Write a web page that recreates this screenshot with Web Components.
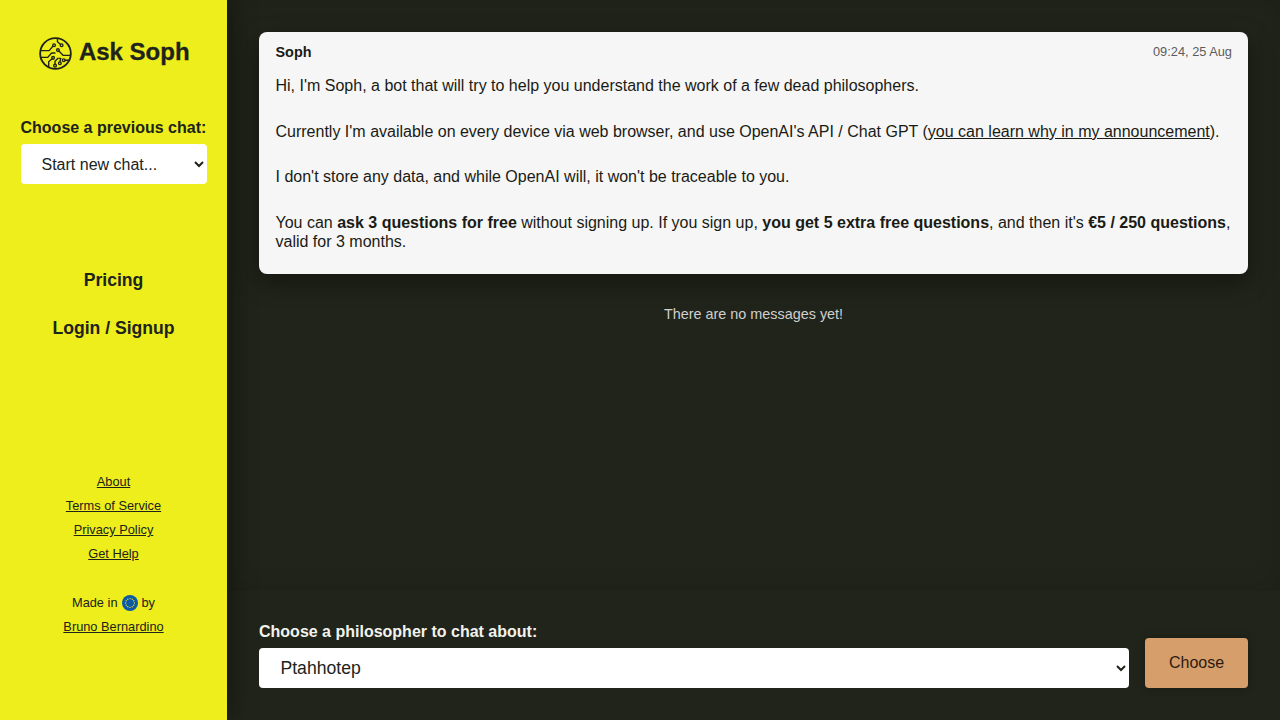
<!DOCTYPE html>
<html lang="en">
<head>
<meta charset="utf-8">
<title>Ask Soph</title>
<style>
  html, body { margin: 0; height: 100%; }
  body {
    font-family: "Liberation Sans", Arial, sans-serif;
    font-size: 16px;
    color: #20231b;
    background: #21241a;
  }
  ask-app { height: 720px; }
  ask-message a { color: inherit; }
</style>
</head>
<body>
<ask-app>
  <ask-sidebar slot="sidebar">
    <ask-logo></ask-logo>
    <ask-select-field label="Choose a previous chat:" value="Start new chat..."></ask-select-field>
  </ask-sidebar>
  <ask-chat slot="main">
    <ask-message name="Soph" time="09:24, 25 Aug">
      <p>Hi, I'm Soph, a bot that will try to help you understand the work of a few dead philosophers.</p>
      <p>Currently I'm available on every device via web browser, and use OpenAI's API / Chat GPT (<a href="#">you can learn why in my announcement</a>).</p>
      <p>I don't store any data, and while OpenAI will, it won't be traceable to you.</p>
      <p>You can <b>ask 3 questions for free</b> without signing up. If you sign up, <b>you get 5 extra free questions</b>, and then it's <b>€5 / 250 questions</b>, valid for 3 months.</p>
    </ask-message>
  </ask-chat>
</ask-app>

<script>
class AskApp extends HTMLElement {
  constructor() {
    super();
    this.attachShadow({ mode: "open" });
    this.shadowRoot.innerHTML = `
      <style>
        :host { display: flex; width: 100%; }
        .side { flex: 0 0 227px; display: flex; }
        .main { flex: 1; min-width: 0; display: flex; }
      </style>
      <div class="side"><slot name="sidebar"></slot></div>
      <div class="main"><slot name="main"></slot></div>
    `;
  }
}

class AskSidebar extends HTMLElement {
  constructor() {
    super();
    this.attachShadow({ mode: "open" });
    this.shadowRoot.innerHTML = `
      <style>
        :host {
          display: flex;
          flex-direction: column;
          box-sizing: border-box;
          width: 227px;
          height: 720px;
          padding: 36px 20.5px 0;
          background: #eeee1c;
          box-shadow: 4px 0 24px rgba(0, 0, 0, 0.35);
          position: relative;
          z-index: 2;
        }
        nav { display: flex; flex-direction: column; align-items: center; margin-top: 87px; gap: 29px; }
        nav a { font-size: 17.6px; line-height: 19px; font-weight: 700; color: inherit; text-decoration: none; }
        footer { margin-top: 132px; text-align: center; font-size: 12.8px; line-height: 24px; }
        footer a { color: inherit; display: block; }
        .made { margin-top: 25px; display: flex; justify-content: center; align-items: center; gap: 4px; }
        .made svg { display: block; }
      </style>
      <slot></slot>
      <nav>
        <a href="#">Pricing</a>
        <a href="#">Login / Signup</a>
      </nav>
      <footer>
        <a href="#">About</a>
        <a href="#">Terms of Service</a>
        <a href="#">Privacy Policy</a>
        <a href="#">Get Help</a>
        <div class="made">Made in
          <svg width="16" height="16" viewBox="0 0 16 16" aria-label="EU">
            <circle cx="8" cy="8" r="8" fill="#0b5aa6"/>
            <g fill="#e8d534">
              <circle cx="8" cy="3.6" r=".7"/><circle cx="10.2" cy="4.2" r=".7"/><circle cx="11.8" cy="5.8" r=".7"/>
              <circle cx="12.4" cy="8" r=".7"/><circle cx="11.8" cy="10.2" r=".7"/><circle cx="10.2" cy="11.8" r=".7"/>
              <circle cx="8" cy="12.4" r=".7"/><circle cx="5.8" cy="11.8" r=".7"/><circle cx="4.2" cy="10.2" r=".7"/>
              <circle cx="3.6" cy="8" r=".7"/><circle cx="4.2" cy="5.8" r=".7"/><circle cx="5.8" cy="4.2" r=".7"/>
            </g>
          </svg>
          by</div>
        <a href="#">Bruno Bernardino</a>
      </footer>
    `;
  }
}

class AskLogo extends HTMLElement {
  constructor() {
    super();
    this.attachShadow({ mode: "open" });
    this.shadowRoot.innerHTML = `
      <style>
        :host { display: flex; align-items: center; justify-content: center; gap: 7px; height: 34px; padding-left: 1.5px; margin-bottom: 49px; }
        span { font-size: 24px; font-weight: 700; line-height: 32px; position: relative; top: -1px; -webkit-text-stroke: .3px #20231b; }
        svg { display: block; }
      </style>
      <svg width="33" height="33" viewBox="0 0 34 34" fill="none" stroke="#20231b" stroke-width="1.4" stroke-linecap="round" stroke-linejoin="round">
        <circle cx="17" cy="17" r="15.8" stroke-width="1.9"/>
        <circle cx="15.5" cy="8.5" r="1.4"/>
        <path d="M14.3 9.5 10.5 14H2.2"/>
        <path d="M19 1.5V5l3 2.5"/>
        <circle cx="23.3" cy="8.5" r="1.4"/>
        <circle cx="19.5" cy="13.5" r="1.4"/>
        <path d="M20.5 14.5 25 19h6.8"/>
        <path d="M2.5 21H9l4-4.5h3.5"/>
        <circle cx="14.5" cy="21.5" r="1.4"/>
        <path d="M13.5 22.5 10 25.5v6"/>
        <circle cx="25.5" cy="24" r="1.4"/>
        <path d="M30.5 24H27"/>
        <circle cx="21.5" cy="27" r="1.4"/>
        <path d="M20.5 22h2l-1 3.5"/>
        <circle cx="16.5" cy="29.5" r="1.4"/>
        <path d="M16.5 28v-3l3-3"/>
      </svg>
      <span>Ask Soph</span>
    `;
  }
}

class AskSelectField extends HTMLElement {
  constructor() {
    super();
    this.attachShadow({ mode: "open" });
    const label = this.getAttribute("label");
    const value = this.getAttribute("value");
    this.shadowRoot.innerHTML = `
      <style>
        :host { display: block; }
        label { display: block; font-weight: 700; line-height: 18px; margin-bottom: 7px; color: var(--label-color, inherit); white-space: nowrap; }
        select {
          display: block;
          box-sizing: border-box;
          width: 100%;
          height: 40px;
          padding: 0 var(--field-pad, 17px);
          border: 0;
          border-radius: 4px;
          background: #fff;
          color: #20231b;
          font: var(--field-size, 16px) "Liberation Sans", Arial, sans-serif;
        }
      </style>
      <label for="s">${label}</label>
      <select id="s"><option>${value}</option></select>
    `;
  }
}

class AskMessage extends HTMLElement {
  constructor() {
    super();
    this.attachShadow({ mode: "open" });
    this.shadowRoot.innerHTML = `
      <style>
        :host {
          display: block;
          box-sizing: border-box;
          background: #f6f6f6;
          border-radius: 8px;
          padding: 12px 16.5px 22.6px;
          box-shadow: 0 8px 24px rgba(0, 0, 0, 0.4);
          color: #1a1b15;
        }
        header { display: flex; justify-content: space-between; align-items: center; height: 16px; margin-bottom: 16.2px; }
        strong { font-size: 14.4px; }
        time { font-size: 12.8px; color: #5c5c5c; position: relative; top: -1px; margin-right: -.5px; }
        ::slotted(p) { margin: 0 0 26.4px; line-height: 19.2px; }
        ::slotted(p:last-child) { margin-bottom: 0; }
      </style>
      <header><strong>${this.getAttribute("name")}</strong><time>${this.getAttribute("time")}</time></header>
      <slot></slot>
    `;
  }
}

class AskChat extends HTMLElement {
  constructor() {
    super();
    this.attachShadow({ mode: "open" });
    this.shadowRoot.innerHTML = `
      <style>
        :host { display: flex; flex-direction: column; width: 100%; height: 720px; }
        .messages { flex: 1; min-height: 0; padding: 32px 32px 0; box-shadow: 0 0 24px rgba(0,0,0,.12) inset; }
        .empty { margin-top: 32px; text-align: center; font-size: 14.4px; line-height: 16px; color: #cfcfcf; }
        ask-select-field { flex: 1; --label-color: #f3f3ee; --field-size: 17.6px; --field-pad: 17.5px; }
        form { display: flex; align-items: flex-end; gap: 16px; padding: 32px; }
        button {
          width: 103px;
          height: 50px;
          border: 0;
          border-radius: 4px;
          background: #d69e6b;
          color: #2b1a10;
          font: 16px "Liberation Sans", Arial, sans-serif;
          box-shadow: 0 0 8px rgba(0, 0, 0, .25);
        }
      </style>
      <div class="messages">
        <slot></slot>
        <div class="empty">There are no messages yet!</div>
      </div>
      <form>
        <ask-select-field label="Choose a philosopher to chat about:" value="Ptahhotep"></ask-select-field>
        <button type="button">Choose</button>
      </form>
    `;
  }
}

customElements.define("ask-app", AskApp);
customElements.define("ask-sidebar", AskSidebar);
customElements.define("ask-logo", AskLogo);
customElements.define("ask-select-field", AskSelectField);
customElements.define("ask-message", AskMessage);
customElements.define("ask-chat", AskChat);
</script>
</body>
</html>
